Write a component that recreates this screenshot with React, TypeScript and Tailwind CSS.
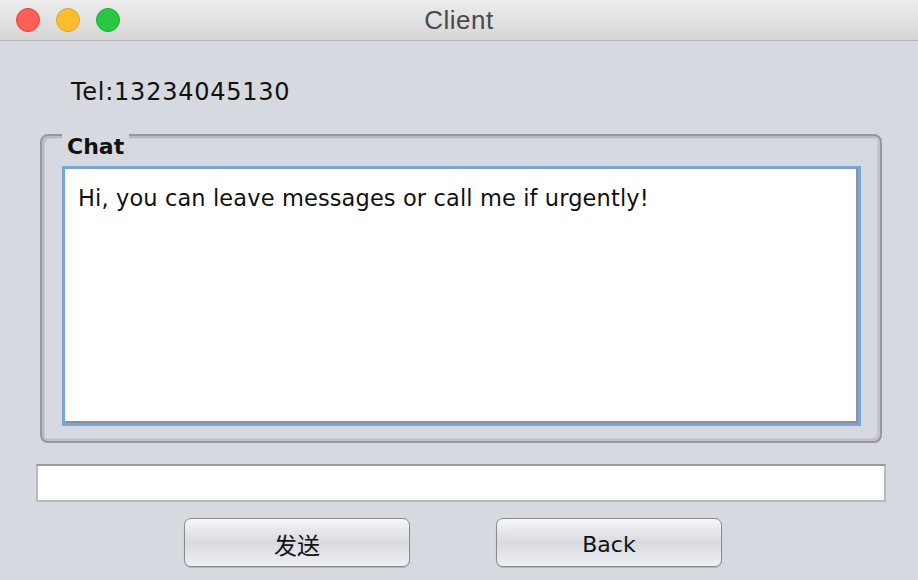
import React from 'react';

const dots = [
  'bg-[#fe5f57] border-[#e2463f]',
  'bg-[#febc2e] border-[#e1a023]',
  'bg-[#28c840] border-[#1fac2f]',
];

function TitleBar() {
  return (
    <div className="grid h-[41px] grid-cols-[1fr_auto_1fr] items-center border-b border-[#b3b3b3] bg-linear-to-b from-[#ececec] to-[#d6d6d6]">
      <div className="flex items-center gap-4 pl-4">
        {dots.map(c => (
          <span key={c} className={`h-6 w-6 rounded-full border ${c}`} />
        ))}
      </div>
      <div className="font-['Liberation_Sans',sans-serif] text-[26px] leading-none tracking-[0.5px] text-[#4b4b4b]">Client</div>
      <div />
    </div>
  );
}

function Button({ label, cjk }: { label: string; cjk?: boolean }) {
  return (
    <button
      className={`flex h-[49px] w-[226px] items-center justify-center rounded-[7px] border border-[#8a8a8e] bg-linear-to-b from-[#f6f6f8] via-[#d9dadf] to-[#eef0f6] pt-[3px] shadow-[0_1px_1px_rgba(0,0,0,0.18)] text-[#111] ${
        cjk ? "text-[23px] font-['Noto_Sans_CJK_SC',sans-serif]" : "text-[22px] font-['DejaVu_Sans',sans-serif]"
      }`}
    >
      {label}
    </button>
  );
}

export default function App() {
  return (
    <div className="h-[580px] w-[918px] overflow-hidden bg-[#d6d9df] font-['DejaVu_Sans',sans-serif]">
      <TitleBar />
      <div className="flex flex-col pl-[36px] pt-[37px]">
        <div className="pl-[35px] text-[24px] leading-[28px] tracking-[0.75px] text-[#111]">Tel:13234045130</div>

        <div className="relative ml-[4px] mt-[28px] h-[309px] w-[842px] rounded-[8px] border-2 border-[#97989d] pb-[15px] pl-[20px] pr-[19px] pt-[30px] shadow-[inset_2px_2px_0_#b9bac0,inset_-2px_-2px_0_#c0c1c6,inset_3px_3px_0_#cacbd0,inset_-3px_-3px_0_#cacbd0]">
          <div className="absolute left-[20px] top-[-3px] bg-[#d6d9df] px-[5px] pt-[2px] text-[22px] font-bold leading-[24px] text-[#111]">Chat</div>
          <div className="h-full border-[3px] border-[#79a5d6]">
            <div className="h-full border-b-2 border-r-2 border-[#8f9096] bg-white pl-[13px] pt-[16px] text-[22.5px] leading-[27px] tracking-[0.12px] text-[#111]">
              Hi, you can leave messages or call me if urgently!
            </div>
          </div>
        </div>

        <div className="mt-[21px] h-[38px] w-[850px] border-2 border-[#bababa] border-t-[#9a9a9a] bg-white" />

        <div className="mt-[16px] flex gap-[86px] pl-[148px]">
          <Button label="发送" cjk />
          <Button label="Back" />
        </div>
      </div>
    </div>
  );
}
